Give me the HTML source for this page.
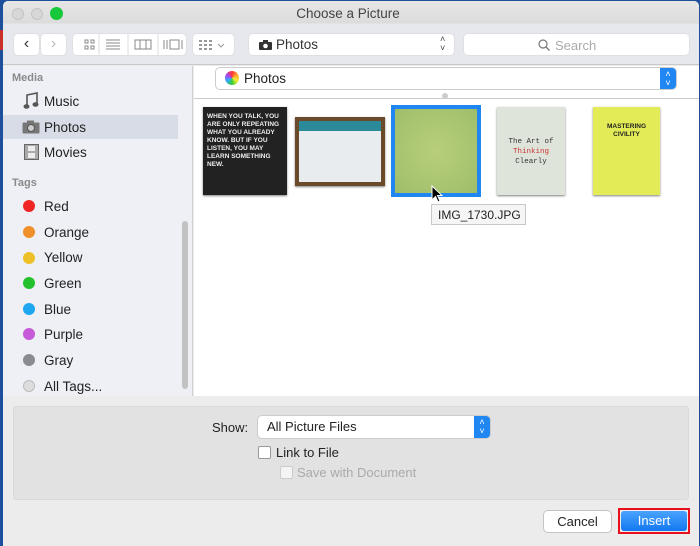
<!DOCTYPE html>
<html><head><style>
*{box-sizing:border-box;margin:0;padding:0}
body{width:700px;height:542px;background:#1d4f9c;font-family:"Liberation Sans",sans-serif;position:relative;overflow:hidden}
.abs{position:absolute}
#win{left:3px;top:1px;width:696px;height:545px;background:#ececec;border-radius:5px 5px 0 0;overflow:hidden}
.tb{left:0;top:0;width:696px;height:64px;background:linear-gradient(#e6e6e6 0,#dcdcdc 22px,#e6e8ee 23px,#e6e8ee 64px);border-bottom:1px solid #c8c8c8}
.btn{background:#fff;border-radius:4px;box-shadow:0 0 0 .5px #d6d6d6}
.side{left:0;top:65px;width:190px;height:330px;background:#eef0f5;border-right:1px solid #d0d0d0}
.main{left:191px;top:65px;width:505px;height:330px;background:#fff}
.it{position:absolute;left:41px;font-size:13.5px;color:#222}
.dot{position:absolute;left:20px;width:12px;height:12px;border-radius:50%}
.hd{position:absolute;left:9px;font-size:11px;font-weight:bold;color:#8a8a8a}
.th{position:absolute;box-shadow:0 1px 2px rgba(0,0,0,.5)}
</style></head><body>
<div class="abs" style="left:0;top:30px;width:3px;height:20px;background:#c9302c"></div>
<div id="win" class="abs">
<div class="abs tb"></div>
<div class="abs" style="left:9px;top:7px;width:12px;height:12px;border-radius:50%;background:#d7d7d7;border:1px solid #c4c4c4"></div>
<div class="abs" style="left:28px;top:7px;width:12px;height:12px;border-radius:50%;background:#d7d7d7;border:1px solid #c4c4c4"></div>
<div class="abs" style="left:47px;top:6px;width:13px;height:13px;border-radius:50%;background:#17c83a"></div>
<div class="abs" style="left:0;top:5px;width:690px;text-align:center;font-size:13.5px;color:#444">Choose a Picture</div>
<div class="abs btn" style="left:11px;top:33px;width:25px;height:21px;font-size:16px;text-align:center;line-height:20px;color:#333">&#8249;</div>
<div class="abs btn" style="left:38px;top:33px;width:25px;height:21px;font-size:16px;text-align:center;line-height:20px;color:#bbb">&#8250;</div>
<div class="abs btn" style="left:70px;top:33px;width:113px;height:21px"></div>
<svg class="abs" style="left:70px;top:33px" width="113" height="21"><g fill="none" stroke="#888" stroke-width="1"><rect x="12" y="6" width="3" height="3"/><rect x="18" y="6" width="3" height="3"/><rect x="12" y="12" width="3" height="3"/><rect x="18" y="12" width="3" height="3"/><path d="M33 6h14M33 9h14M33 12h14M33 15h14M62 6h16v9H62zM67 6v9M73 6v9M91 6v9M94 6v9M97 6h9v9h-9zM109 6v9"/></g><path d="M26 0v21M55 0v21M85 0v21" stroke="#ddd"/></svg>
<div class="abs btn" style="left:190px;top:33px;width:41px;height:21px"></div>
<svg class="abs" style="left:196px;top:38px" width="32" height="12"><g fill="#999"><rect x="0" y="1" width="3" height="2"/><rect x="5" y="1" width="3" height="2"/><rect x="10" y="1" width="3" height="2"/><rect x="0" y="5" width="3" height="2"/><rect x="5" y="5" width="3" height="2"/><rect x="10" y="5" width="3" height="2"/><rect x="0" y="9" width="3" height="2"/><rect x="5" y="9" width="3" height="2"/><rect x="10" y="9" width="3" height="2"/></g><path d="M19 5l3 3 3-3" stroke="#999" fill="none"/></svg>
<div class="abs btn" style="left:246px;top:33px;width:205px;height:21px"></div>
<svg class="abs" style="left:256px;top:39px" width="14" height="10"><rect x="0" y="2" width="13" height="8" rx="1" fill="#333"/><rect x="4" y="0" width="5" height="3" fill="#333"/><circle cx="6.5" cy="6" r="2.3" fill="#fff"/></svg>
<div class="abs" style="left:273px;top:36px;font-size:13.5px;color:#333">Photos</div>
<div class="abs" style="left:437px;top:34px;font-size:9px;color:#444;line-height:9px">&#708;<br>&#709;</div>
<div class="abs btn" style="left:461px;top:33px;width:225px;height:21px"></div>
<svg class="abs" style="left:535px;top:38px" width="12" height="12"><circle cx="5" cy="5" r="4" stroke="#777" fill="none" stroke-width="1.2"/><path d="M8 8l3.5 3.5" stroke="#777" stroke-width="1.3"/></svg>
<div class="abs" style="left:552px;top:37px;font-size:13px;color:#aaa">Search</div>
<div class="abs side"></div>
<div class="hd" style="top:71px">Media</div>
<div class="it" style="top:93px">Music</div>
<div class="abs" style="left:0;top:114px;width:175px;height:24px;background:#d8dce6"></div>
<div class="it" style="top:119px">Photos</div>
<div class="it" style="top:144px">Movies</div>
<svg class="abs" style="left:20px;top:91px" width="16" height="18"><path d="M4 14V3l10-2v11" stroke="#555" stroke-width="1.6" fill="none"/><ellipse cx="3.5" cy="14.5" rx="3" ry="2.3" fill="#555"/><ellipse cx="12.5" cy="12.5" rx="3" ry="2.3" fill="#555"/></svg>
<svg class="abs" style="left:19px;top:119px" width="18" height="14"><rect x="0.5" y="2.5" width="17" height="11" rx="1" fill="#777"/><rect x="5" y="0.5" width="7" height="3" fill="#777"/><circle cx="9" cy="8" r="3.5" fill="#ccc" stroke="#555"/></svg>
<svg class="abs" style="left:21px;top:143px" width="15" height="16"><rect x="0.5" y="0.5" width="14" height="15" fill="#aaa" stroke="#666"/><rect x="4" y="2" width="7" height="5" fill="#eee"/><rect x="4" y="9" width="7" height="5" fill="#eee"/></svg>
<div class="hd" style="top:176px">Tags</div>
<div class="dot" style="top:199px;background:#f02626"></div><div class="it" style="top:198px">Red</div>
<div class="dot" style="top:225px;background:#f0902a"></div><div class="it" style="top:224px">Orange</div>
<div class="dot" style="top:251px;background:#eec028"></div><div class="it" style="top:249px">Yellow</div>
<div class="dot" style="top:276px;background:#24c12e"></div><div class="it" style="top:275px">Green</div>
<div class="dot" style="top:302px;background:#1ea6f0"></div><div class="it" style="top:301px">Blue</div>
<div class="dot" style="top:327px;background:#c75ad8"></div><div class="it" style="top:326px">Purple</div>
<div class="dot" style="top:353px;background:#8a8b90"></div><div class="it" style="top:352px">Gray</div>
<div class="dot" style="top:379px;background:#ddd;border:1px solid #bbb"></div><div class="it" style="top:378px">All Tags...</div>
<div class="abs" style="left:179px;top:220px;width:6px;height:168px;border-radius:3px;background:#c2c2c2"></div>
<div class="abs main"></div>
<div class="abs" style="left:191px;top:97px;width:505px;height:1px;background:#ccc"></div>
<div class="abs btn" style="left:213px;top:67px;width:460px;height:21px;box-shadow:0 0 0 1px #ccc"></div>
<div class="abs" style="left:222px;top:70px;width:14px;height:14px;border-radius:50%;background:conic-gradient(#f33,#fa3,#ee3,#3c3,#3af,#a4e,#f33)"></div>
<div class="abs" style="left:241px;top:70px;font-size:13.5px;color:#222">Photos</div>
<div class="abs" style="left:657px;top:67px;width:16px;height:21px;background:#1f86f2;border-radius:0 4px 4px 0;color:#fff;font-size:9px;line-height:9px;text-align:center;padding-top:2px">&#708;<br>&#709;</div>
<div class="abs" style="left:439px;top:92px;width:6px;height:6px;border-radius:50%;background:#ccc"></div>
<div class="th" style="left:200px;top:106px;width:84px;height:88px;background:#222"><div style="color:#eee;font-size:6.5px;font-weight:bold;padding:6px 4px;line-height:8px">WHEN YOU TALK, YOU ARE ONLY REPEATING WHAT YOU ALREADY KNOW. BUT IF YOU LISTEN, YOU MAY LEARN SOMETHING NEW.</div></div>
<div class="th" style="left:292px;top:116px;width:90px;height:69px;background:#6b4a2a"><div style="margin:4px;height:61px;background:#e8ecef;border-top:10px solid #2a8a9a"></div></div>
<div class="abs" style="left:388px;top:104px;width:90px;height:92px;background:#1f86f2"></div>
<div class="abs" style="left:392px;top:108px;width:82px;height:84px;background:radial-gradient(#b8cf7a,#9fbe6a)"></div>
<div class="th" style="left:494px;top:106px;width:68px;height:88px;background:#dfe4da"><div style="font-family:'Liberation Mono',monospace;font-size:7.5px;text-align:center;padding-top:30px;line-height:10px;color:#333">The Art of<br><span style="color:#c33">Thinking</span><br>Clearly</div></div>
<div class="th" style="left:590px;top:106px;width:67px;height:88px;background:#e3ec56"><div style="font-size:6.5px;text-align:center;padding-top:16px;line-height:8px;font-weight:bold;color:#222">MASTERING<br>CIVILITY</div></div>
<div class="abs" style="left:428px;top:203px;width:95px;height:21px;background:#f5f5f5;border:1px solid #c8c8c8;font-size:12px;padding:3px 6px;color:#222">IMG_1730.JPG</div>
<svg class="abs" style="left:428px;top:184px" width="12" height="18"><path d="M1 1v14l3.5-3.5 2.5 5.5 2-1-2.5-5.5H11z" fill="#000" stroke="#fff"/></svg>
<div class="abs" style="left:10px;top:405px;width:676px;height:94px;background:#e2e2e2;border-radius:3px;border:1px solid #dadada"></div>
<div class="abs" style="left:209px;top:419px;font-size:13px;color:#222">Show:</div>
<div class="abs btn" style="left:255px;top:415px;width:232px;height:22px;box-shadow:0 0 0 1px #ccc"></div>
<div class="abs" style="left:264px;top:418px;font-size:13px;color:#222">All Picture Files</div>
<div class="abs" style="left:471px;top:415px;width:16px;height:22px;background:#1f86f2;border-radius:0 4px 4px 0;color:#fff;font-size:9px;line-height:9px;text-align:center;padding-top:2px">&#708;<br>&#709;</div>
<div class="abs" style="left:255px;top:445px;width:13px;height:13px;background:#fff;border:1px solid #999;border-radius:2px"></div>
<div class="abs" style="left:273px;top:444px;font-size:13px;color:#222">Link to File</div>
<div class="abs" style="left:277px;top:465px;width:13px;height:13px;background:#f4f4f4;border:1px solid #ccc;border-radius:2px"></div>
<div class="abs" style="left:294px;top:464px;font-size:13px;color:#aaa">Save with Document</div>
<div class="abs btn" style="left:541px;top:510px;width:67px;height:21px;box-shadow:0 0 0 1px #c4c4c4;font-size:13px;text-align:center;line-height:21px;color:#222">Cancel</div>
<div class="abs" style="left:615px;top:507px;width:72px;height:26px;border:2px solid #e8111b"></div>
<div class="abs" style="left:618px;top:510px;width:66px;height:20px;background:linear-gradient(#4aa3ff,#1377ef);border-radius:3px;font-size:13px;text-align:center;line-height:20px;color:#fff">Insert</div>
</div>
</body></html>
